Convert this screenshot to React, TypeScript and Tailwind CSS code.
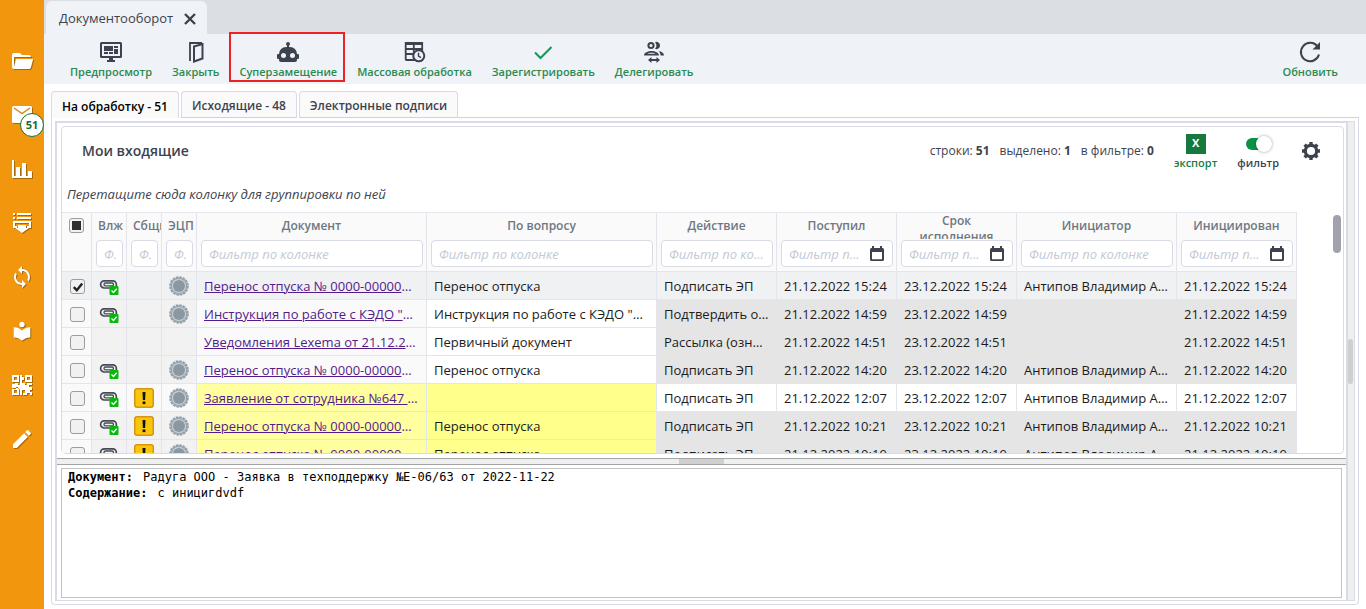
import React from "react";
import { MdEdit, MdLocalLibrary, MdSync } from "react-icons/md";

const PATH_FOLDER =
  "M19,20H4C2.89,20 2,19.1 2,18V6C2,4.89 2.89,4 4,4H10L12,6H19A2,2 0 0,1 21,8L4,8V18L6.14,10H23.21L20.93,18.5C20.7,19.37 19.92,20 19,20Z";
const PATH_QR =
  "M0 0h7v7H0zM2 2v3h3V2zM13 0h7v7h-7zM15 2v3h3V2zM0 13h7v7H0zM2 15v3h3v-3zM8 0h2v2h2v3h-2v3h3v2h2V8h5v2h-3v2h3v3h-2v2h2v3h-2v-2h-3v2h-4v-2h2v-3h-3v5H8v-6H6v-2H4v2H0V9h3V8h3v2h2z";
const PATH_ROBOT =
  "M12,2A2,2 0 0,1 14,4C14,4.74 13.6,5.39 13,5.73V7H14A7,7 0 0,1 21,14H22A1,1 0 0,1 23,15V18A1,1 0 0,1 22,19H21V20A2,2 0 0,1 19,22H5A2,2 0 0,1 3,20V19H2A1,1 0 0,1 1,18V15A1,1 0 0,1 2,14H3A7,7 0 0,1 10,7H11V5.73C10.4,5.39 10,4.74 10,4A2,2 0 0,1 12,2M7.5,13A2.5,2.5 0 0,0 5,15.5A2.5,2.5 0 0,0 7.5,18A2.5,2.5 0 0,0 10,15.5A2.5,2.5 0 0,0 7.5,13M16.5,13A2.5,2.5 0 0,0 14,15.5A2.5,2.5 0 0,0 16.5,18A2.5,2.5 0 0,0 19,15.5A2.5,2.5 0 0,0 16.5,13Z";

const FolderIcon = () => (
  <svg viewBox="0 0 24 24" className="size-6" fill="currentColor"><path d={PATH_FOLDER} /></svg>
);
const QrIcon = () => (
  <svg viewBox="0 0 20 20" className="size-5" fill="currentColor" fillRule="evenodd"><path d={PATH_QR} /></svg>
);
const MailIcon = () => (
  <svg viewBox="0 0 24 24" className="size-6">
    <rect x="2" y="3" width="20" height="17" rx="1.5" fill="currentColor" />
    <path d="M4 5l8 5.500 8-5.500" fill="none" stroke="#d98a12" strokeWidth="1.500" />
  </svg>
);
const ChartIcon = () => (
  <svg viewBox="0 0 24 24" className="size-6" fill="currentColor">
    <path d="M2 3h2v16h2v-9h4v9h2V6h4v13h2v-5h4v7H2z" />
  </svg>
);
const QueueIcon = () => (
  <svg viewBox="0 0 24 24" className="size-6" fill="currentColor">
    <path d="M3 2h2v2H3zM7 2h14v2H7zM3 6h2v2H3zM7 6h14v2H7zM3 10h18v7h-4v-2h2v-3H5v3h2v2H3zM8 14h8v3h3l-7 5-7-5h3z" />
  </svg>
);

const RobotIcon = () => (
  <svg viewBox="1 1 22 22" className="size-[22px]" fill="currentColor"><path d={PATH_ROBOT} /></svg>
);
const PreviewIcon = () => (
  <svg viewBox="0 0 24 24" className="size-6" fill="currentColor">
    <path d="M2.500 2h19A1.500 1.500 0 0 1 23 3.500v13a1.500 1.500 0 0 1-1.500 1.500H14v2h2v2H8v-2h2v-2H2.500A1.500 1.500 0 0 1 1 16.500v-13A1.500 1.500 0 0 1 2.500 2zM3 4v12h18V4z" fillRule="evenodd" />
    <path d="M5 6h9v5H5zM15 6h4v2h-4zM15 9h4v5h-4zM5 12h4v2H5zM10 12h4v2h-4z" />
  </svg>
);
const DoorIcon = () => (
  <svg viewBox="0 0 24 24" className="size-6" fill="none" stroke="currentColor" strokeWidth="2">
    <path d="M6 21V3h12" strokeWidth="1.800" />
    <path d="M10 6.500L18.500 4v14.500L10 21.500z" />
  </svg>
);
const TableClockIcon = () => (
  <svg viewBox="0 0 24 24" className="size-6" fill="none" stroke="currentColor">
    <path d="M12 20H3.500a.8.8 0 0 1-.8-.8V3h16.500v9M3 9h16M3 14h9M10.800 3v17" strokeWidth="1.800" />
    <path d="M2 3.500h18" strokeWidth="3" />
    <circle cx="15.800" cy="15.800" r="5.500" strokeWidth="2" fill="#eff2f7" />
    <path d="M15.500 12.800v3.400l2.500 1.500" strokeWidth="1.500" />
  </svg>
);
const CheckIcon = () => (
  <svg viewBox="0 0 24 24" className="size-6 text-[#0c9a5b]" fill="none" stroke="currentColor" strokeWidth="2">
    <path d="M4 12.500l5.500 5.500L20.500 7" />
  </svg>
);
const DelegateIcon = () => (
  <svg viewBox="0 0 24 24" className="size-6" fill="currentColor">
    <circle cx="9" cy="5.500" r="2.600" fill="none" stroke="currentColor" strokeWidth="2" />
    <path d="M13 2.200a3.600 3.600 0 1 1 0 6.600 5 5 0 0 0 0-6.600z" />
    <path d="M2 15.500c0-3 4-4.500 7.500-4.500s7.500 1.500 7.500 4.500zM5.500 13.700h8c-1-.6-2.500-.9-4-.9s-3 .3-4 .9z" fillRule="evenodd" />
    <path d="M16.500 11c3 .5 5.500 2 5.500 4.500h-3.500c0-2-.8-3.500-2-4.500z" />
    <path d="M9.500 17v2h5v-2l3.500 3-3.500 3v-2h-5v2L6 20z" />
  </svg>
);
const RefreshIcon = () => (
  <svg viewBox="0 0 24 24" className="size-6" fill="none" stroke="currentColor" strokeWidth="2">
    <path d="M21 14.500A9.200 9.200 0 1 1 19.500 6.500" />
    <path d="M22 2v7.500h-7.500z" fill="currentColor" stroke="none" />
  </svg>
);
const GearIcon = () => (
  <svg viewBox="0 0 20 20" className="size-5" fill="none" stroke="currentColor">
    <circle cx="10" cy="10" r="5.700" strokeWidth="3.200" />
    <path d="M10 1v3M10 16v3M1 10h3M16 10h3M3.600 3.600l2.200 2.200M14.200 14.200l2.200 2.200M3.600 16.400l2.200-2.200M14.200 5.800l2.200-2.200" strokeWidth="3.400" />
  </svg>
);

const CalendarIcon = () => (
  <svg viewBox="0 0 16 16" className="size-4 shrink-0 text-[#3d434e]" fill="currentColor">
    <path d="M3 0h2v2h6V0h2v2h.5A1.500 1.500 0 0 1 15 3.500v10a1.500 1.500 0 0 1-1.500 1.500h-11A1.500 1.500 0 0 1 1 13.500v-10A1.500 1.500 0 0 1 2.500 2H3zM3 6v7.200h10V6z" fillRule="evenodd" />
  </svg>
);
const ClipIcon = () => (
  <svg viewBox="0 0 20 18" className="mx-auto block h-[18px] w-5">
    <path d="M17.300 9V7.200a3.400 3.400 0 0 0-3.400-3.400H5.200a3.600 3.600 0 0 0 0 7.200H13" fill="none" stroke="#464b57" strokeWidth="1.700" />
    <rect x="5" y="6" width="9.500" height="2.800" rx="1.400" fill="#f2f2f2" stroke="#464b57" strokeWidth="1.300" />
    <rect x="10.500" y="9" width="9" height="9" rx="1" fill="#06b80b" />
    <path d="M12.500 13.500l2 2 3.200-3.700" fill="none" stroke="#fff" strokeWidth="1.300" />
  </svg>
);
const AlertIcon = () => (
  <svg viewBox="0 0 20 20" className="mx-auto block size-5">
    <rect x=".75" y=".75" width="18.500" height="18.500" rx="2.500" fill="#f8c60a" stroke="#d99411" strokeWidth="1.500" />
    <path d="M8.500 4h3l-.4 8H8.900z" fill="#111" />
    <rect x="8.600" y="13.500" width="2.800" height="2.600" fill="#111" />
  </svg>
);
const SealIcon = () => (
  <svg viewBox="0 0 20 20" className="mx-auto block size-5">
    <circle cx="10" cy="10" r="8.800" fill="#c9d0d4" stroke="#93a0a9" strokeWidth="2" strokeDasharray="2.600 .855" />
    <circle cx="10" cy="10" r="7.600" fill="#c9d0d4" stroke="#93a0a9" strokeWidth="1" />
    <circle cx="10" cy="10" r="6" fill="#8b98a2" />
  </svg>
);

const sideItems: { name: string; icon: React.ReactNode; badge?: string }[] = [
  { name: "Папки", icon: <FolderIcon /> },
  { name: "Входящие", icon: <MailIcon />, badge: "51" },
  { name: "Отчёты", icon: <ChartIcon /> },
  { name: "Очередь", icon: <QueueIcon /> },
  { name: "Синхронизация", icon: <MdSync className="size-6" /> },
  { name: "Справочник", icon: <MdLocalLibrary className="size-[22px]" /> },
  { name: "QR-код", icon: <QrIcon /> },
  { name: "Редактировать", icon: <MdEdit className="size-6" /> },
];

const tools: { label: string; icon: React.ReactNode; marked?: boolean }[] = [
  { label: "Предпросмотр", icon: <PreviewIcon /> },
  { label: "Закрыть", icon: <DoorIcon /> },
  { label: "Суперзамещение", icon: <RobotIcon />, marked: true },
  { label: "Массовая обработка", icon: <TableClockIcon /> },
  { label: "Зарегистрировать", icon: <CheckIcon /> },
  { label: "Делегировать", icon: <DelegateIcon /> },
];

const columns: { title: string; kind: "short" | "text" | "date" }[] = [
  { title: "Влж", kind: "short" },
  { title: "Сбщние", kind: "short" },
  { title: "ЭЦП", kind: "short" },
  { title: "Документ", kind: "text" },
  { title: "По вопросу", kind: "text" },
  { title: "Действие", kind: "text" },
  { title: "Поступил", kind: "date" },
  { title: "Срок исполнения", kind: "date" },
  { title: "Инициатор", kind: "text" },
  { title: "Инициирован", kind: "date" },
];

type Row = {
  clip: boolean; alert: boolean; seal: boolean; doc: string; topic: string; action: string;
  time: string; who: string; tone: "selected" | "read" | "fresh" | "urgent";
};
const A = "Антипов Владимир Александрович";
const P = "Перенос отпуска № 0000-00000М от 21.12.2022";
const rows: Row[] = [
  { clip: true, alert: false, seal: true, doc: P, topic: "Перенос отпуска", action: "Подписать ЭП", time: "15:24", who: A, tone: "selected" },
  { clip: true, alert: false, seal: true, doc: "Инструкция по работе с КЭДО \"Lexema\"", topic: "Инструкция по работе с КЭДО \"Lexema\"", action: "Подтвердить ознакомление", time: "14:59", who: "", tone: "read" },
  { clip: false, alert: false, seal: false, doc: "Уведомления Lexema от 21.12.2022", topic: "Первичный документ", action: "Рассылка (ознакомление)", time: "14:51", who: "", tone: "read" },
  { clip: true, alert: false, seal: true, doc: P, topic: "Перенос отпуска", action: "Подписать ЭП", time: "14:20", who: A, tone: "read" },
  { clip: true, alert: true, seal: true, doc: "Заявление от сотрудника №647 от 21.12.2022", topic: "", action: "Подписать ЭП", time: "12:07", who: A, tone: "fresh" },
  { clip: true, alert: true, seal: true, doc: P, topic: "Перенос отпуска", action: "Подписать ЭП", time: "10:21", who: A, tone: "urgent" },
  { clip: true, alert: true, seal: true, doc: P, topic: "Перенос отпуска", action: "Подписать ЭП", time: "10:19", who: A, tone: "urgent" },
];

const tones = {
  selected: { check: "bg-[#f0f1f3]", icon: "bg-[#f0f1f3]", doc: "bg-[#f0f1f3]", topic: "bg-[#f0f1f3]", rest: "bg-[#f0f1f3]" },
  read: { check: "bg-[#fafafa]", icon: "bg-[#f2f2f2]", doc: "bg-[#fafafa]", topic: "bg-white", rest: "bg-[#e5e5e5]" },
  fresh: { check: "bg-[#fafafa]", icon: "bg-[#fafafa]", doc: "bg-[#ffffa0]", topic: "bg-[#ffff8c]", rest: "bg-white" },
  urgent: { check: "bg-[#fafafa]", icon: "bg-[#f2f2f2]", doc: "bg-[#ffffa0]", topic: "bg-[#ffff8c]", rest: "bg-[#e5e5e5]" },
};

function Tick({ name, state }: { name: string; state: "on" | "off" | "some" }) {
  return (
    <label className="grid place-items-center">
      <input
        type="checkbox"
        aria-label={name}
        defaultChecked={state === "on"}
        className="col-start-1 row-start-1 size-[15px] appearance-none rounded-[3px] border border-[#9c9c9c] bg-[#f1f1f1]"
      />
      {state === "on" && (
        <svg viewBox="0 0 10 10" className="pointer-events-none col-start-1 row-start-1 size-[10px]" fill="none" stroke="#222" strokeWidth="2.400">
          <path d="M.8 5l3 3.200L9.200 1.500" />
        </svg>
      )}
      {state === "some" && <span className="pointer-events-none col-start-1 row-start-1 size-[9px] bg-[#2d2d2d]" />}
    </label>
  );
}

function Tool({ label, icon, marked }: { label: string; icon: React.ReactNode; marked?: boolean }) {
  return (
    <button className="relative flex h-[50px] flex-col items-center px-2.5 pt-1.5 text-[11px] font-semibold whitespace-nowrap text-[#2b8a50]">
      <span className="flex h-6 items-center text-[#3d434e]">{icon}</span>
      <span className="leading-4">{label}</span>
      {marked && <span className="absolute -top-0.5 right-0.5 left-0 h-[50px] border-2 border-[#ec2227]" />}
    </button>
  );
}

const cell = "truncate border-r border-b border-[#e4e4ec] px-[7px] pt-0.5";
const iconCell = "border-r border-b border-[#e4e4ec] p-0";

export default function App() {
  return (
    <div className="flex h-screen overflow-hidden bg-white font-['Open_Sans','Noto_Sans',sans-serif] text-[13px] text-[#3d434e]">
      <nav className="flex w-11 shrink-0 flex-col bg-[#f2960e] pt-[34px] text-white">
        {sideItems.map((item) => (
          <a
            key={item.name}
            href="#"
            aria-label={item.name}
            className="relative flex h-[54px] items-center justify-center"
          >
            <span className="drop-shadow-[1px_1px_0_rgba(90,60,0,0.5)]">{item.icon}</span>
            {item.badge && (
              <span className="absolute top-[25px] left-5 grid size-6 place-items-center rounded-full border border-[#14702c] bg-white text-[11px] font-bold text-[#14702c]">
                {item.badge}
              </span>
            )}
          </a>
        ))}
      </nav>

      <div className="flex min-w-0 flex-1 flex-col">
        <div className="flex h-[34px] shrink-0 bg-[#dbdee3] pt-px pl-0.5">
          <div className="flex items-center gap-[11px] rounded-t-md bg-[#eff2f7] pt-0.5 pr-[11px] pl-[13px]">
            <span>Документооборот</span>
            <button aria-label="Закрыть вкладку">
              <svg viewBox="0 0 12 12" className="size-3" stroke="currentColor" strokeWidth="2.400"><path d="M1 1l10 10M11 1L1 11" /></svg>
            </button>
          </div>
        </div>
        <div className="flex h-[50px] shrink-0 bg-[#eff2f7] pr-[18px] pl-4">
          {tools.map((t) => <Tool key={t.label} {...t} />)}
          <div className="ml-auto"><Tool label="Обновить" icon={<RefreshIcon />} /></div>
        </div>

        <div className="flex min-h-0 flex-1 flex-col pt-[7px] pr-[7px] pb-1 pl-[7px]">
          <div role="tablist" className="flex h-[27px] shrink-0 gap-0.5 text-xs font-semibold">
            <button role="tab" aria-selected="true" className="h-[27px] rounded-t border border-b-0 border-[#dadae6] bg-[#fafafa] px-2.5 pt-1 text-black">На обработку - 51</button>
            <button role="tab" aria-selected="false" className="h-[27px] rounded-t border border-b-[#d0d0e0] border-[#dadae6] bg-[#fafafa] px-2.5 pt-0.5">Исходящие - 48</button>
            <button role="tab" aria-selected="false" className="h-[27px] rounded-t border border-b-[#d0d0e0] border-[#dadae6] bg-[#fafafa] px-2.5 pt-0.5">Электронные подписи</button>
            <span className="-ml-0.5 flex-1 border-b border-[#d0d0e0]" />
          </div>

          <div className="flex min-h-0 flex-1 rounded-b border border-t-0 border-[#dadae6] p-[3px]">
            <div className="flex min-w-0 flex-1 flex-col border-2 border-b border-[#d9dbe8]">
              <section className="mt-[3px] mr-0.5 ml-1 flex min-h-0 flex-1 flex-col rounded border border-[#dadae6]">
                <header className="flex h-[54px] shrink-0 items-center gap-5 pr-[22px] pb-1.5 pl-5">
                  <h1 className="text-sm font-semibold">Мои входящие</h1>
                  <p className="ml-auto flex gap-2.5 text-xs">
                    <span>строки: <b>51</b></span>
                    <span>выделено: <b>1</b></span>
                    <span>в фильтре: <b>0</b></span>
                  </p>
                  <button className="flex flex-col items-center gap-px pt-0.5 text-[11px] font-semibold text-[#14803f]">
                    <span className="grid size-5 place-items-center bg-[#15793f] font-bold text-white">X</span>
                    <span className="leading-4">экспорт</span>
                  </button>
                  <label className="flex flex-col items-center gap-px pt-0.5 text-[11px] font-semibold">
                    <span className="flex h-5 items-center">
                      <input type="checkbox" role="switch" defaultChecked className="relative h-3 w-6 appearance-none rounded-full bg-[#0b9247] after:absolute after:-top-0.5 after:left-2.5 after:size-4 after:rounded-full after:bg-white after:shadow-[0_0_3px_rgba(0,0,0,0.4)]" />
                    </span>
                    <span className="leading-4">фильтр</span>
                  </label>
                  <button aria-label="Настройки" className="pl-0.5"><GearIcon /></button>
                </header>
                <p className="h-[31px] shrink-0 pt-1 pl-[5px] italic">Перетащите сюда колонку для группировки по ней</p>

                <div className="flex min-h-0 flex-1 justify-between overflow-hidden">
                  <div className="min-w-0 overflow-hidden">
                    <table className="w-[1235px] table-fixed border-separate border-spacing-0 text-[13px]">
                      <colgroup>
                        <col className="w-[30px]" />
                        <col className="w-[35px]" />
                        <col className="w-[35px]" />
                        <col className="w-[35px]" />
                        <col className="w-[230px]" />
                        <col className="w-[230px]" />
                        <col className="w-[120px]" />
                        <col className="w-[120px]" />
                        <col className="w-[120px]" />
                        <col className="w-[160px]" />
                        <col className="w-[120px]" />
                      </colgroup>
                      <thead>
                        <tr className="bg-[#fafafa]">
                          <th className="border border-l-0 border-[#e4e4ec] p-0 align-top">
                            <div className="flex h-[25px] items-center justify-center"><Tick name="Выбрать все" state="some" /></div>
                          </th>
                          {columns.map((c) => (
                            <th key={c.title} className="border border-l-0 border-[#e4e4ec] p-0 align-top font-semibold text-[#6f7782]">
                              <div className="flex h-[58px] flex-col">
                                <div className={c.kind === "short" ? "h-[26px] overflow-hidden pl-1.5 text-left text-xs leading-[26px]" : "flex h-[26px] [align-items:safe_center] justify-center overflow-hidden px-3 text-xs leading-4"}>
                                  {c.title}
                                </div>
                                <div className={c.kind === "short" ? "mt-px mr-[3px] ml-1 flex h-[27px] items-center rounded border border-[#dadae6] bg-white pl-[7px]" : "mt-px mr-[3px] ml-1 flex h-[27px] items-center gap-1 rounded border border-[#dadae6] bg-white px-[7px]"}>
                                  <input
                                    aria-label={"Фильтр: " + c.title}
                                    placeholder={c.kind === "short" ? "Ф." : "Фильтр по колонке"}
                                    className="w-full min-w-0 flex-1 bg-transparent pt-0.5 text-[13px] font-normal text-ellipsis italic outline-none placeholder:text-[#c3c9d3]"
                                  />
                                  {c.kind === "date" && <CalendarIcon />}
                                </div>
                              </div>
                            </th>
                          ))}
                        </tr>
                      </thead>
                      <tbody className="text-[#1c1c1c]">
                        {rows.map((r, i) => {
                          const t = tones[r.tone];
                          return (
                            <tr key={i} className="h-7">
                              <td className={iconCell + " pt-0.5 pl-0.5 " + t.check}><Tick name={"Строка " + (i + 1)} state={i === 0 ? "on" : "off"} /></td>
                              <td className={iconCell + " " + t.icon}>{r.clip && <ClipIcon />}</td>
                              <td className={iconCell + " " + t.icon}>{r.alert && <AlertIcon />}</td>
                              <td className={iconCell + " " + t.icon}>{r.seal && <SealIcon />}</td>
                              <td className={cell + " text-[#551a8b] " + t.doc}><a href="#" className="underline">{r.doc}</a></td>
                              <td className={cell + " " + t.topic}>{r.topic}</td>
                              <td className={cell + " " + t.rest}>{r.action}</td>
                              <td className={cell + " " + t.rest}>21.12.2022 {r.time}</td>
                              <td className={cell + " " + t.rest}>23.12.2022 {r.time}</td>
                              <td className={cell + " " + t.rest}>{r.who}</td>
                              <td className={cell + " " + t.rest}>21.12.2022 {r.time}</td>
                            </tr>
                          );
                        })}
                      </tbody>
                    </table>
                  </div>
                  <div className="mt-[3px] mr-0.5 h-[38px] w-2 shrink-0 rounded-full bg-[#a0a3ad]" />
                </div>
              </section>

              <div className="mt-1 flex h-[7px] shrink-0 justify-center border-y border-[#a5a5a5] bg-[#efefef]">
                <span className="w-[45px] bg-[#cfcfcf]" />
              </div>
              <div className="mx-1 mt-[3px] mb-0.5 h-[130px] shrink-0 border border-[#c3c3c3] px-1.5 font-['DejaVu_Sans_Mono','Liberation_Mono',monospace] text-xs leading-4 text-black">
                <p><b>Документ:</b><span className="ml-2.5">Радуга ООО - Заявка в техподдержку №Е-06/63 от 2022-11-22</span></p>
                <p><b>Содержание:</b><span className="ml-2.5">с иницигdvdf</span></p>
              </div>
            </div>
            <div className="flex w-[7px] shrink-0 items-center border-y border-r border-[#d9dbe8] bg-[#efefef]">
              <span className="h-[45px] w-[5px] rounded-full bg-[#cfcfcf]" />
            </div>
          </div>
        </div>
      </div>
    </div>
  );
}
